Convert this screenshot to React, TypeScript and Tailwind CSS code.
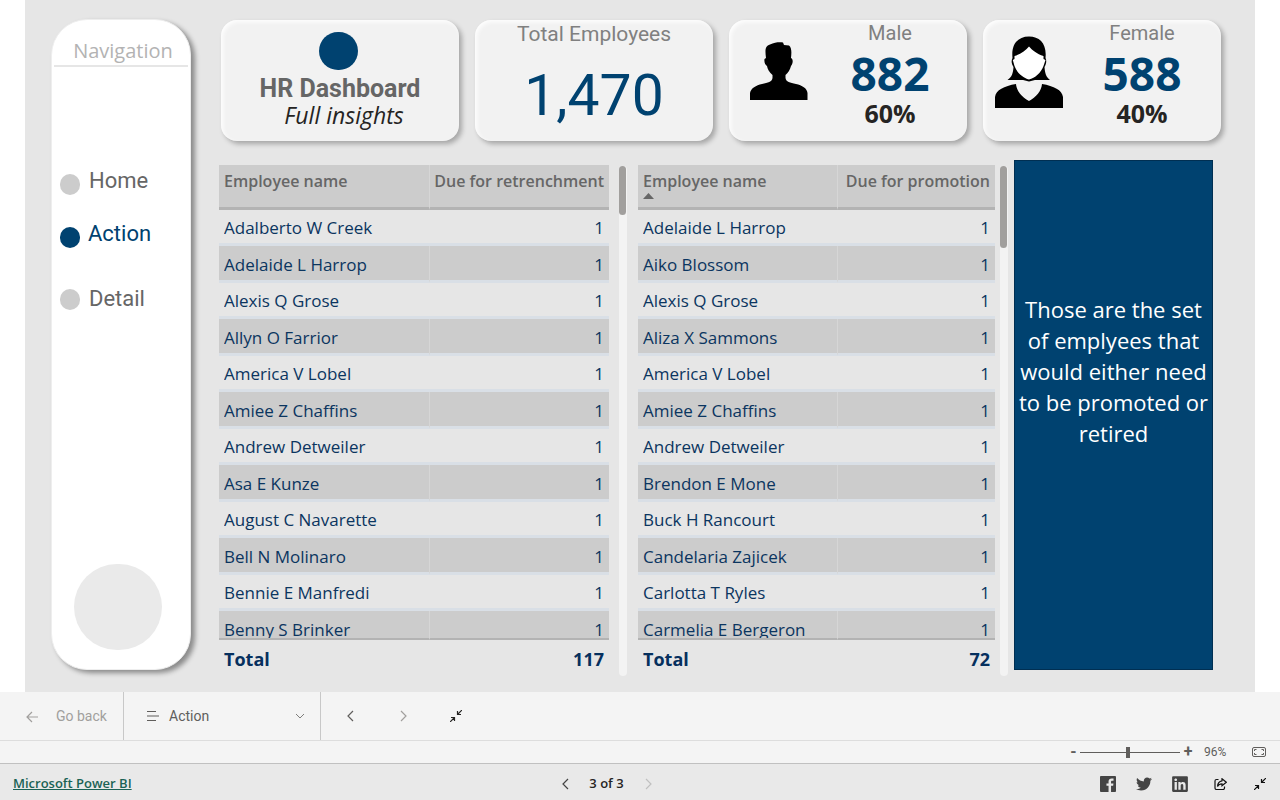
import type { ReactNode } from "react";
import { FaLinkedin, FaTwitter } from "react-icons/fa";

const retrenchment = [
  "Adalberto W Creek", "Adelaide L Harrop", "Alexis Q Grose", "Allyn O Farrior",
  "America V Lobel", "Amiee Z Chaffins", "Andrew Detweiler", "Asa E Kunze",
  "August C Navarette", "Bell N Molinaro", "Bennie E Manfredi", "Benny S Brinker",
];

const promotion = [
  "Adelaide L Harrop", "Aiko Blossom", "Alexis Q Grose", "Aliza X Sammons",
  "America V Lobel", "Amiee Z Chaffins", "Andrew Detweiler", "Brendon E Mone",
  "Buck H Rancourt", "Candelaria Zajicek", "Carlotta T Ryles", "Carmelia E Bergeron",
];

function Card({ children }: { children: ReactNode }) {
  return (
    <section className="h-[121px] rounded-2xl bg-[#f2f2f2] shadow-[3px_3px_5px_rgba(0,0,0,0.28),inset_2px_2px_4px_rgba(255,255,255,0.9)]">
      {children}
    </section>
  );
}

function PersonCard({ label, count, share, icon }: { label: string; count: string; share: string; icon: ReactNode }) {
  return (
    <Card>
      <div className="flex h-full">
        <div className="shrink-0 pt-4">{icon}</div>
        <div className="flex-1 text-center">
          <h2 className="font-['Roboto',sans-serif] text-[20px] leading-[26px] text-[#808080]">{label}</h2>
          <p className="text-[46px] font-bold leading-[54px] text-[#004270]">{count}</p>
          <p className="text-[25px] font-bold leading-[26px] text-[#252423]">{share}</p>
        </div>
      </div>
    </Card>
  );
}

function MaleIcon() {
  return (
    <svg viewBox="0 0 58 58" className="ml-[21px] mr-[5px] mt-[6px] h-[58px] w-[58px]" aria-hidden="true">
      <path d="M0 58V51C1 46 6 43.500 12 42C18 40.500 22 40 22.500 36V33C19 30 17.500 27 17 24C15 23 14 20 14.500 17L16 16C15 8 15 4 20 2.500C25 0 30 0 33 0.500L34 3L39 3.500C42 6 41.500 11 41 16C43.500 17 43 22 41 24C40 28 38 31 35.500 33V36C36 40 40 40.500 46 42C52 43.500 57 46 57.500 51V58Z" />
    </svg>
  );
}

function FemaleIcon() {
  return (
    <svg viewBox="0 0 68 72" className="ml-3 h-[72px] w-[68px]" aria-hidden="true">
      <path d="M17.500 22C16 8 23 .5 34 .5S52 8 50.500 22C52 25 51 28 49.500 31C50 37 51 41 55 44H40L34 45.500L28 44H12.500C17 41 18 37 18.500 31C16.500 28 16 25 17.500 22Z" />
      <path d="M19.500 20C26 18 31 14 34 10.500C37 14 42 18 48.500 20V23L50.500 24L48.500 30C46 37 40 42 34 43.500C28 42 22 37 19.500 30L17.800 24L19.500 23Z" fill="#fff" />
      <path d="M0 72V61C1 54 9 50 21 48C21.500 55 27 61 34 65C41 61 46.500 55 47 48C59 50 67 54 68 61V72Z" />
    </svg>
  );
}

function EmployeeTable({ label, names, total, sorted, split }: { label: string; names: string[]; total: string; sorted?: boolean; split: string }) {
  return (
    <table className="w-full table-fixed border-separate border-spacing-0 text-[17px] text-[#0b3560]">
      <colgroup>
        <col className={split} />
        <col />
      </colgroup>
      <thead>
        <tr className="h-[45px] bg-[#cccccc] text-[16px] leading-[22px] text-[#666666]">
          <th scope="col" className="whitespace-nowrap border-b-[3px] border-r border-b-[#b3b3b3] border-r-[#d6d6d6] px-[5px] pt-[5px] text-left align-top font-semibold">
            Employee name
            {sorted && (
              <svg viewBox="0 0 11 6" className="mt-px block h-[6px] w-[11px] fill-[#666666]" aria-hidden="true">
                <path d="M0 6L5.500 0L11 6Z" />
              </svg>
            )}
          </th>
          <th scope="col" className="whitespace-nowrap border-b-[3px] border-[#b3b3b3] pr-[5px] pt-[5px] text-right align-top font-semibold">
            {label}
          </th>
        </tr>
      </thead>
      <tbody>
        {names.map((name, i) => {
          const shaded = i % 2 === 1;
          const last = i === names.length - 1;
          const height = last ? "h-[27px]" : shaded ? "h-[34px]" : "h-[33px]";
          const line = shaded ? "leading-[38px]" : "leading-[36px]";
          const edge = last ? "border-b-2 border-b-[#b3b3b3]" : "border-b-[3px] border-b-[#d9dfe6]";
          return (
            <tr key={name} className={shaded ? "bg-[#cccccc]" : ""}>
              <td className={`${edge} ${shaded ? "border-r border-r-[#d6d6d6]" : ""} px-[5px] py-0`}>
                <div className={`${height} ${line} overflow-hidden whitespace-nowrap`}>{name}</div>
              </td>
              <td className={`${edge} px-[5px] py-0 text-right`}>
                <div className={`${height} ${line} overflow-hidden`}>1</div>
              </td>
            </tr>
          );
        })}
      </tbody>
      <tfoot>
        <tr className="text-[18px] font-bold leading-[22px] text-[#06305e]">
          <td className="px-[5px] pb-0 pt-2">Total</td>
          <td className="px-[5px] pb-0 pt-2 text-right">{total}</td>
        </tr>
      </tfoot>
    </table>
  );
}

function ScrollTrack({ thumb }: { thumb: string }) {
  return (
    <div className="mb-[-6px] mt-px w-2 shrink-0 rounded-full bg-[#f3f3f3]">
      <div className={`${thumb} w-[7px] rounded-full bg-[#a19f9d]`} />
    </div>
  );
}

function Stroke({ d, className, box = "0 0 12 12" }: { d: string; className: string; box?: string }) {
  return (
    <svg viewBox={box} className={className} fill="none" stroke="currentColor" strokeWidth="1.2" aria-hidden="true">
      <path d={d} />
    </svg>
  );
}

const collapse = "M12 0L7.500 4.500M7.500 1V4.500H11M0 12L4.500 7.500M1 7.500H4.500V11";

export default function App() {
  return (
    <div className="flex min-h-screen flex-col bg-white font-['Open_Sans',sans-serif]">
      <main className="mx-[25px] flex flex-1 bg-[#e6e6e6] pb-[22px] pl-[26px] pr-[34px] pt-[19px]">
        <aside className="flex w-[140px] shrink-0 flex-col rounded-[36px] border border-[#eeeeee] bg-white shadow-[4px_3px_5px_rgba(0,0,0,0.4)]">
          <h2 className="mx-[2px] border-b-2 border-[#e6e6e6] pl-1 pt-[17px] text-center text-[20px] leading-[28px] text-[#b3b3b3]">Navigation</h2>
          <nav className="mt-[100px] flex flex-col pl-2 font-['Roboto',sans-serif] text-[22px] leading-[28px] text-[#666666]">
            <a href="#home" className="flex items-end gap-[9px]">
              <span className="h-[21px] w-5 rounded-full bg-[#cccccc]" />Home
            </a>
            <a href="#action" className="mt-[25px] flex items-end gap-2 text-[#004270]">
              <span className="h-[21px] w-5 rounded-full bg-[#004270]" />Action
            </a>
            <a href="#detail" className="mt-[37px] flex items-center gap-[9px]">
              <span className="h-[21px] w-5 rounded-full bg-[#cccccc]" />Detail
            </a>
          </nav>
          <div className="mb-[19px] ml-[22px] mt-auto h-[86px] w-[88px] rounded-full bg-[#eaeaea]" />
        </aside>

        <div className="ml-[28px] flex min-w-0 flex-1 flex-col">
          <div className="ml-[2px] mt-px grid grid-cols-4 gap-4">
            <Card>
              <div className="flex flex-col items-center pt-3">
                <span className="mr-1 h-[38px] w-[39px] rounded-full bg-[#004270]" />
                <h1 className="mt-1 font-['Roboto',sans-serif] text-[25px] font-bold leading-[30px] text-[#666666]">HR Dashboard</h1>
                <p className="pl-2 text-[23px] italic leading-[23px] text-[#252423]">Full insights</p>
              </div>
            </Card>
            <Card>
              <div className="text-center font-['Roboto',sans-serif]">
                <h2 className="text-[21px] leading-[28px] text-[#808080]">Total Employees</h2>
                <p className="text-[57px] leading-[96px] text-[#004270]">1,470</p>
              </div>
            </Card>
            <PersonCard label="Male" count="882" share="60%" icon={<MaleIcon />} />
            <PersonCard label="Female" count="588" share="40%" icon={<FemaleIcon />} />
          </div>

          <div className="mt-[19px] flex flex-1 pr-2">
            <div className="mt-[5px] flex min-w-0 flex-[408] gap-[10px]">
              <EmployeeTable label="Due for retrenchment" names={retrenchment} total="117" split="w-[54%]" />
              <ScrollTrack thumb="h-[49px]" />
            </div>
            <div className="ml-[11px] mt-[5px] flex min-w-0 flex-[370] gap-[5px]">
              <EmployeeTable label="Due for promotion" names={promotion} total="72" sorted split="w-[56%]" />
              <ScrollTrack thumb="h-[82px]" />
            </div>
            <div className="ml-[6px] flex min-w-0 flex-[197] items-center justify-center border border-[#002f52] bg-[#004270] pb-[88px] text-center text-[22px] leading-[31px] text-white">
              <p>Those are the set of emplyees that would either need to be promoted or retired</p>
            </div>
          </div>
        </div>
      </main>

      <div className="flex h-[49px] border-b border-[#dddddd] bg-[#f4f4f4] font-['Roboto',sans-serif] text-[14px] text-[#605e5c]">
        <button className="flex w-[124px] items-center gap-[18px] border-r border-[#c8c8c8] pl-[26px] text-[#a19f9d]">
          <Stroke className="mt-px h-3 w-3" d="M12 6H1M6 1L1 6L6 11" />Go back
        </button>
        <button className="flex w-[197px] items-center gap-[10px] border-r border-[#c8c8c8] pl-[23px] pr-4">
          <Stroke className="h-3 w-3" d="M0 1.500H9M0 6H12M0 10.500H9" />Action
          <Stroke className="ml-auto h-2 w-2" box="0 0 12 12" d="M0 3L6 9L12 3" />
        </button>
        <button aria-label="Previous page" className="ml-[23px] flex w-[12px] items-center"><Stroke className="h-3 w-3" d="M9 1L4 6L9 11" /></button>
        <button aria-label="Next page" className="ml-[41px] flex w-[12px] items-center text-[#a19f9d]"><Stroke className="h-3 w-3" d="M4 1L9 6L4 11" /></button>
        <button aria-label="Exit full screen" className="ml-[41px] flex items-center text-[#252423]"><Stroke className="h-3 w-3" d={collapse} /></button>
      </div>

      <div className="flex h-[23px] items-center justify-end border-b border-[#c0c0c0] bg-[#f4f4f4] pr-[14px] font-['Roboto',sans-serif] text-[12px] text-[#605e5c]">
        <button aria-label="Zoom out" className="w-[10px] pr-[3px] text-[16px] font-bold leading-none">-</button>
        <input
          type="range" min="0" max="100" defaultValue="48" aria-label="Zoom"
          className="h-[11px] w-[100px] appearance-none bg-transparent [&::-webkit-slider-runnable-track]:h-px [&::-webkit-slider-runnable-track]:bg-[#605e5c] [&::-webkit-slider-thumb]:mt-[-5px] [&::-webkit-slider-thumb]:h-[11px] [&::-webkit-slider-thumb]:w-1 [&::-webkit-slider-thumb]:appearance-none [&::-webkit-slider-thumb]:bg-[#605e5c]"
        />
        <button aria-label="Zoom in" className="w-4 text-[16px] font-bold leading-none">+</button>
        <span className="ml-2 w-12">96%</span>
        <button aria-label="Fit to page">
          <svg viewBox="0 0 14 10" className="h-[10px] w-[14px]" fill="none" stroke="currentColor" aria-hidden="true">
            <rect x=".5" y=".5" width="13" height="9" rx="1.500" />
            <path d="M2.500 4V2.500H4.500M9.500 2.500H11.500V4M11.500 6V7.500H9.500M4.500 7.500H2.500V6" />
          </svg>
        </button>
      </div>

      <footer className="grid h-9 grid-cols-[1fr_auto_1fr] items-center bg-[#e9e9e9] pl-[13px] pr-[14px] pt-[3px] text-[13px] font-semibold">
        <a href="#powerbi" className="justify-self-start text-[#1b6355] underline">Microsoft Power BI</a>
        <div className="flex items-center gap-[18px] pr-[66px] text-[#252423]">
          <button aria-label="Previous"><Stroke className="h-3 w-3 text-[#444444]" d="M9 1L4 6L9 11" /></button>
          <span>3 of 3</span>
          <button aria-label="Next"><Stroke className="h-3 w-3 text-[#c0c0c0]" d="M4 1L9 6L4 11" /></button>
        </div>
        <div className="flex items-center gap-5 justify-self-end text-[#444444]">
          <a href="#facebook" aria-label="Facebook">
            <svg viewBox="0 0 16 16" className="h-4 w-4" fill="currentColor" aria-hidden="true">
              <path d="M15.117 0H.883A.883.883 0 0 0 0 .883v14.234c0 .488.395.883.883.883h7.663V9.804H6.460V7.389h2.086V5.607c0-2.066 1.262-3.190 3.106-3.190.883 0 1.642.064 1.863.094v2.160h-1.280c-1 0-1.195.48-1.195 1.180v1.540h2.390l-.31 2.420h-2.080V16h4.077a.883.883 0 0 0 .883-.883V.883A.883.883 0 0 0 15.117 0" />
            </svg>
          </a>
          <a href="#twitter" aria-label="Twitter"><FaTwitter className="h-4 w-4" /></a>
          <a href="#linkedin" aria-label="LinkedIn"><FaLinkedin className="h-[18px] w-4" /></a>
          <button aria-label="Share" className="ml-[6px] text-[#111111]">
            <Stroke className="h-3 w-[13px]" box="0 0 13 12" d="M4.500 1.500H2.500Q1 1.500 1 3V10Q1 11.500 2.500 11.500H9Q10.500 11.500 10.500 10V8.500M8 .8L12.300 4.300L8 7.800V5.800Q5 5.800 3.500 8.500Q3.800 3.500 8 2.800Z" />
          </button>
          <button aria-label="Exit full screen" className="ml-[7px] text-[#111111]"><Stroke className="h-3 w-3" d={collapse} /></button>
        </div>
      </footer>
    </div>
  );
}
